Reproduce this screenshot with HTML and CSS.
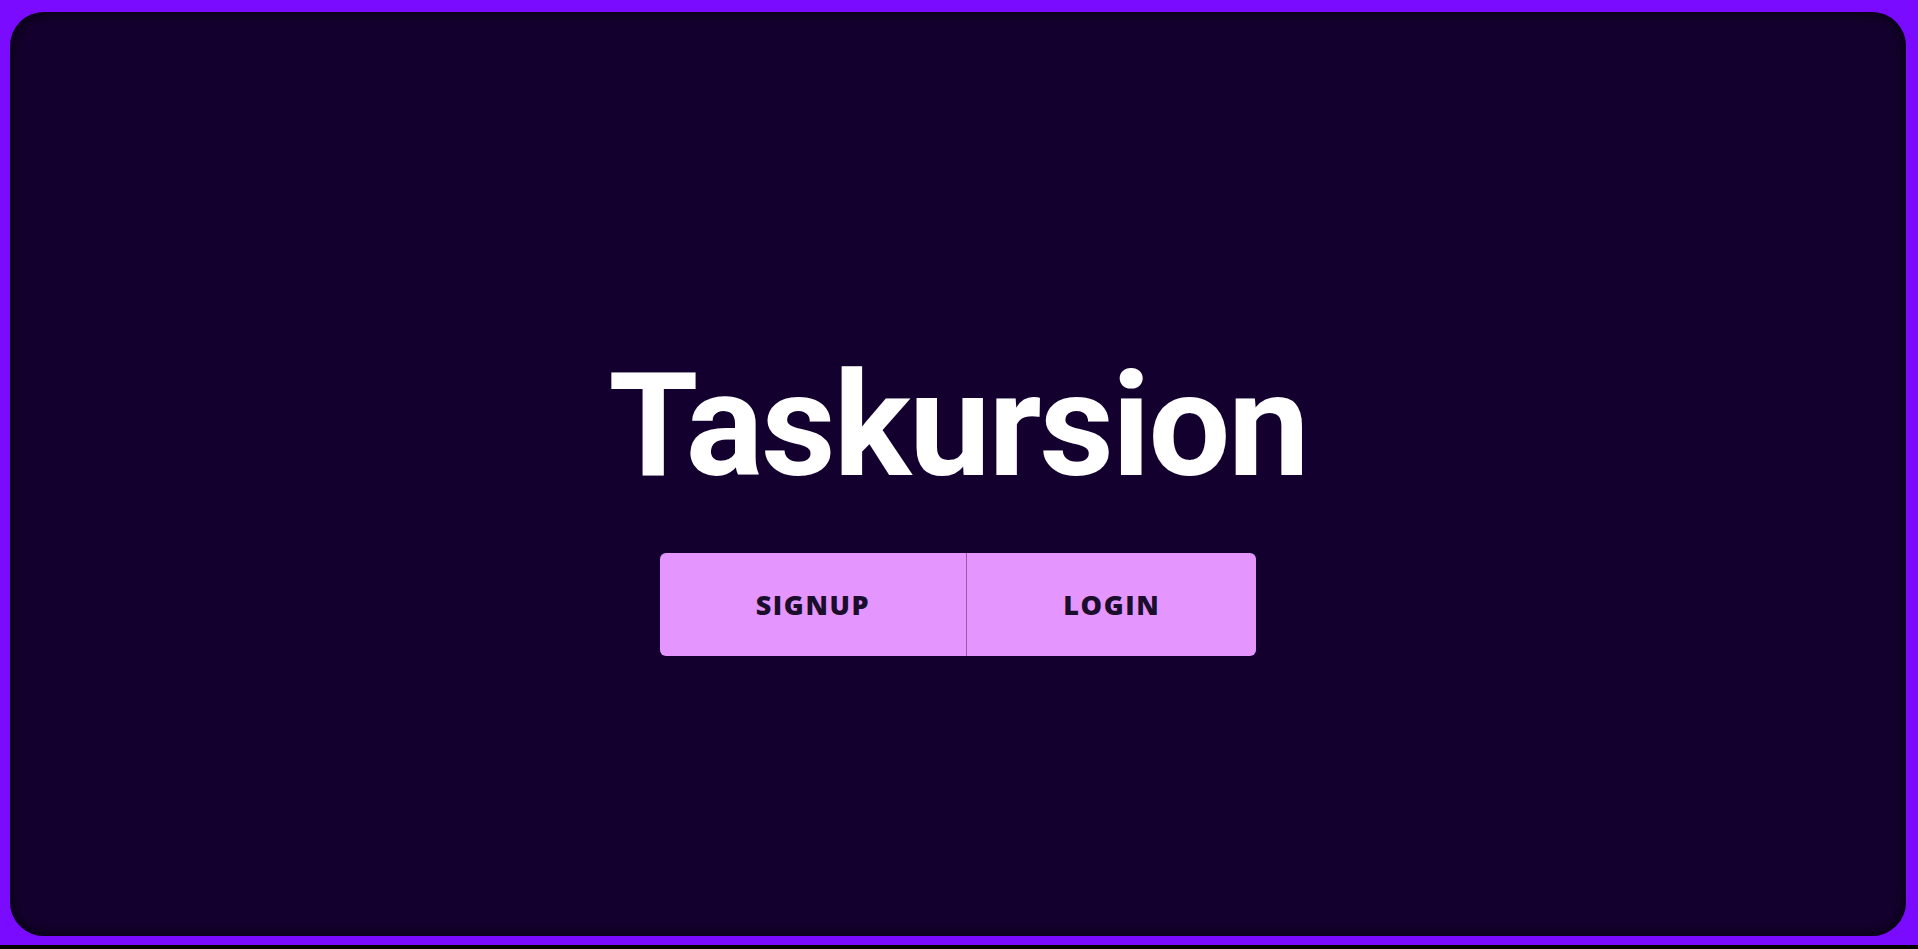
FILE: index.html
```html
<!DOCTYPE html>
<html lang="en">
<head>
<meta charset="utf-8">
<title>Taskursion</title>
<link rel="stylesheet" href="styles.css">
</head>
<body>
<div class="frame">
  <main class="card">
    <h1 class="title">Taskursion</h1>
    <div class="actions">
      <button class="btn btn-signup">SIGNUP</button>
      <button class="btn btn-login">LOGIN</button>
    </div>
  </main>
</div>
</body>
</html>
```
FILE: styles.css
```css
html {
  background: #000;
}
body {
  margin: 0;
  overflow: hidden;
}
.frame {
  box-sizing: border-box;
  height: 945px;
  background: #7a0bff;
  padding: 12px 12px 9px 10px;
  display: flex;
}
.card {
  flex: 1;
  background: #14002e;
  border-radius: 34px;
  box-shadow: inset 0 0 14px rgba(0, 0, 0, 0.85);
  display: flex;
  flex-direction: column;
  align-items: center;
  justify-content: center;
  padding-top: 34px;
}
.title {
  margin: 0;
  font-family: Roboto, "Liberation Sans", sans-serif;
  font-weight: 700;
  font-size: 145px;
  letter-spacing: -2px;
  line-height: 196px;
  color: #fff;
}
.actions {
  display: flex;
  margin-top: 30px;
}
.btn {
  font-family: "Open Sans", "Liberation Sans", sans-serif;
  font-weight: 800;
  font-size: 27px;
  letter-spacing: 1.6px;
  color: #1b0d2c;
  background: #e596fe;
  border: none;
  height: 103px;
  padding: 0 96px;
  cursor: pointer;
}
.btn-signup {
  border-radius: 6px 0 0 6px;
  border-right: 1px solid #9a58a8;
}
.btn-login {
  border-radius: 0 6px 6px 0;
}
```
